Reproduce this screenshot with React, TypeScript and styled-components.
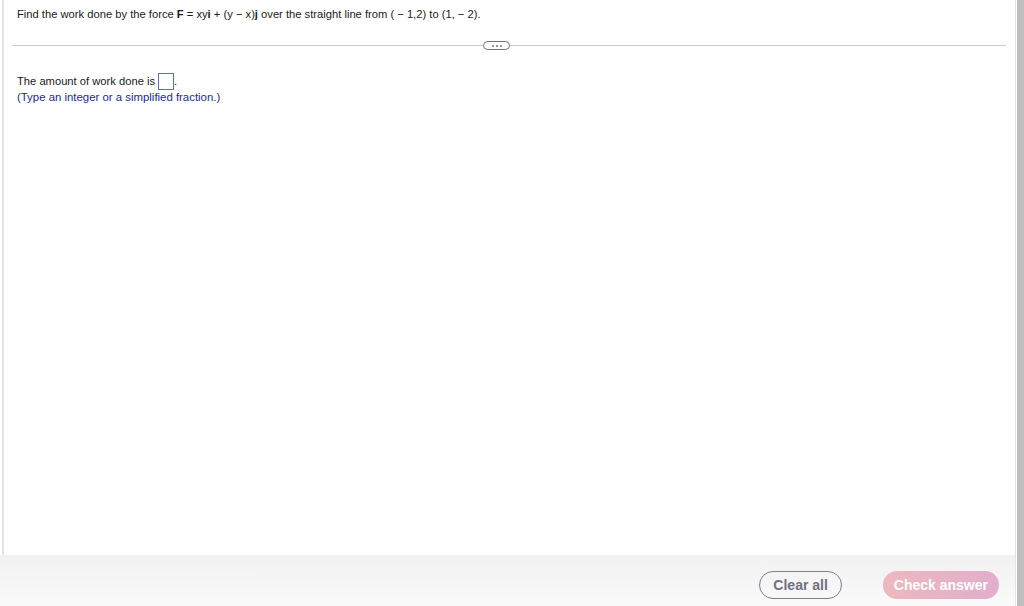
import * as React from "react";
import styled, { createGlobalStyle } from "styled-components";

const GlobalStyle = createGlobalStyle`
  html, body {
    margin: 0;
    padding: 0;
    height: 100%;
    background: #ffffff;
  }
  #root {
    height: 100%;
  }
`;

const Page = styled.div`
  display: flex;
  width: 1024px;
  height: 606px;
  font-family: "Liberation Sans", Arial, sans-serif;
  overflow: hidden;
`;

const Main = styled.div`
  flex: 1;
  display: flex;
  flex-direction: column;
  border-right: 1px solid #e4e4e6;
`;

const Scrollbar = styled.div`
  width: 7px;
  margin-left: 1px;
  background: #bfbfbf;
`;

const Content = styled.div`
  flex: 1;
  margin-left: 2px;
  border-left: 2px solid #e2e3e7;
  padding: 7px 0 0 13px;
`;

const Question = styled.div`
  font-size: 11.2px;
  color: #1a1a1a;
  line-height: 14px;
`;

const Bold = styled.b`
  font-weight: 700;
`;

const DividerRow = styled.div`
  display: flex;
  align-items: center;
  margin: 20px 0 0 -5px;
  width: 994px;
`;

const Line = styled.div<{ grow: number }>`
  flex: ${(p) => p.grow} 1 0;
  height: 1px;
  background: #c6cad3;
`;

const MorePill = styled.div`
  display: flex;
  align-items: center;
  justify-content: center;
  gap: 2px;
  width: 25px;
  height: 7px;
  border: 1px solid #6e7482;
  border-radius: 5px;
  background: #ffffff;
`;

const Dot = styled.span`
  width: 2px;
  height: 2px;
  border-radius: 1px;
  background: #6e7482;
`;

const Answer = styled.div`
  margin-top: 23px;
  font-size: 11.2px;
  line-height: 17px;
  color: #1a1a1a;
  display: flex;
  align-items: center;
`;

const AnswerBox = styled.span`
  display: inline-block;
  width: 14px;
  height: 15px;
  margin-left: 3px;
  border: 1px solid #4c72c9;
`;

const Hint = styled.div`
  font-size: 11.4px;
  line-height: 14px;
  color: #1b2a9b;
`;

const Footer = styled.div`
  height: 51px;
  display: flex;
  align-items: flex-start;
  justify-content: flex-end;
  gap: 41px;
  padding: 16px 16px 0 0;
  box-sizing: border-box;
  background: linear-gradient(#f1f1f1, #fafafa);
`;

const PillButton = styled.button<{ primary?: boolean }>`
  height: 28px;
  border-radius: 14px;
  font-family: "Liberation Sans", Arial, sans-serif;
  font-size: 14px;
  font-weight: 700;
  cursor: pointer;
  padding: 0 ${(p) => (p.primary ? "11px" : "13px")};
  border: ${(p) => (p.primary ? "none" : "1.5px solid #7b8090")};
  color: ${(p) => (p.primary ? "#ffffff" : "#6d7282")};
  background: ${(p) =>
    p.primary ? "linear-gradient(90deg, #edb8bd, #e1aecd)" : "transparent"};
`;

export default function App() {
  return (
    <Page>
      <GlobalStyle />
      <Main>
        <Content>
          <Question>
            Find the work done by the force <Bold>F</Bold> = xy<Bold>i</Bold> +
            (y − x)<Bold>j</Bold> over the straight line from ( − 1,2) to (1, − 2).
          </Question>
          <DividerRow>
            <Line grow={471} />
            <MorePill>
              <Dot />
              <Dot />
              <Dot />
            </MorePill>
            <Line grow={496} />
          </DividerRow>
          <Answer>
            The amount of work done is
            <AnswerBox />.
          </Answer>
          <Hint>(Type an integer or a simplified fraction.)</Hint>
        </Content>
        <Footer>
          <PillButton>Clear all</PillButton>
          <PillButton primary>Check answer</PillButton>
        </Footer>
      </Main>
      <Scrollbar />
    </Page>
  );
}
